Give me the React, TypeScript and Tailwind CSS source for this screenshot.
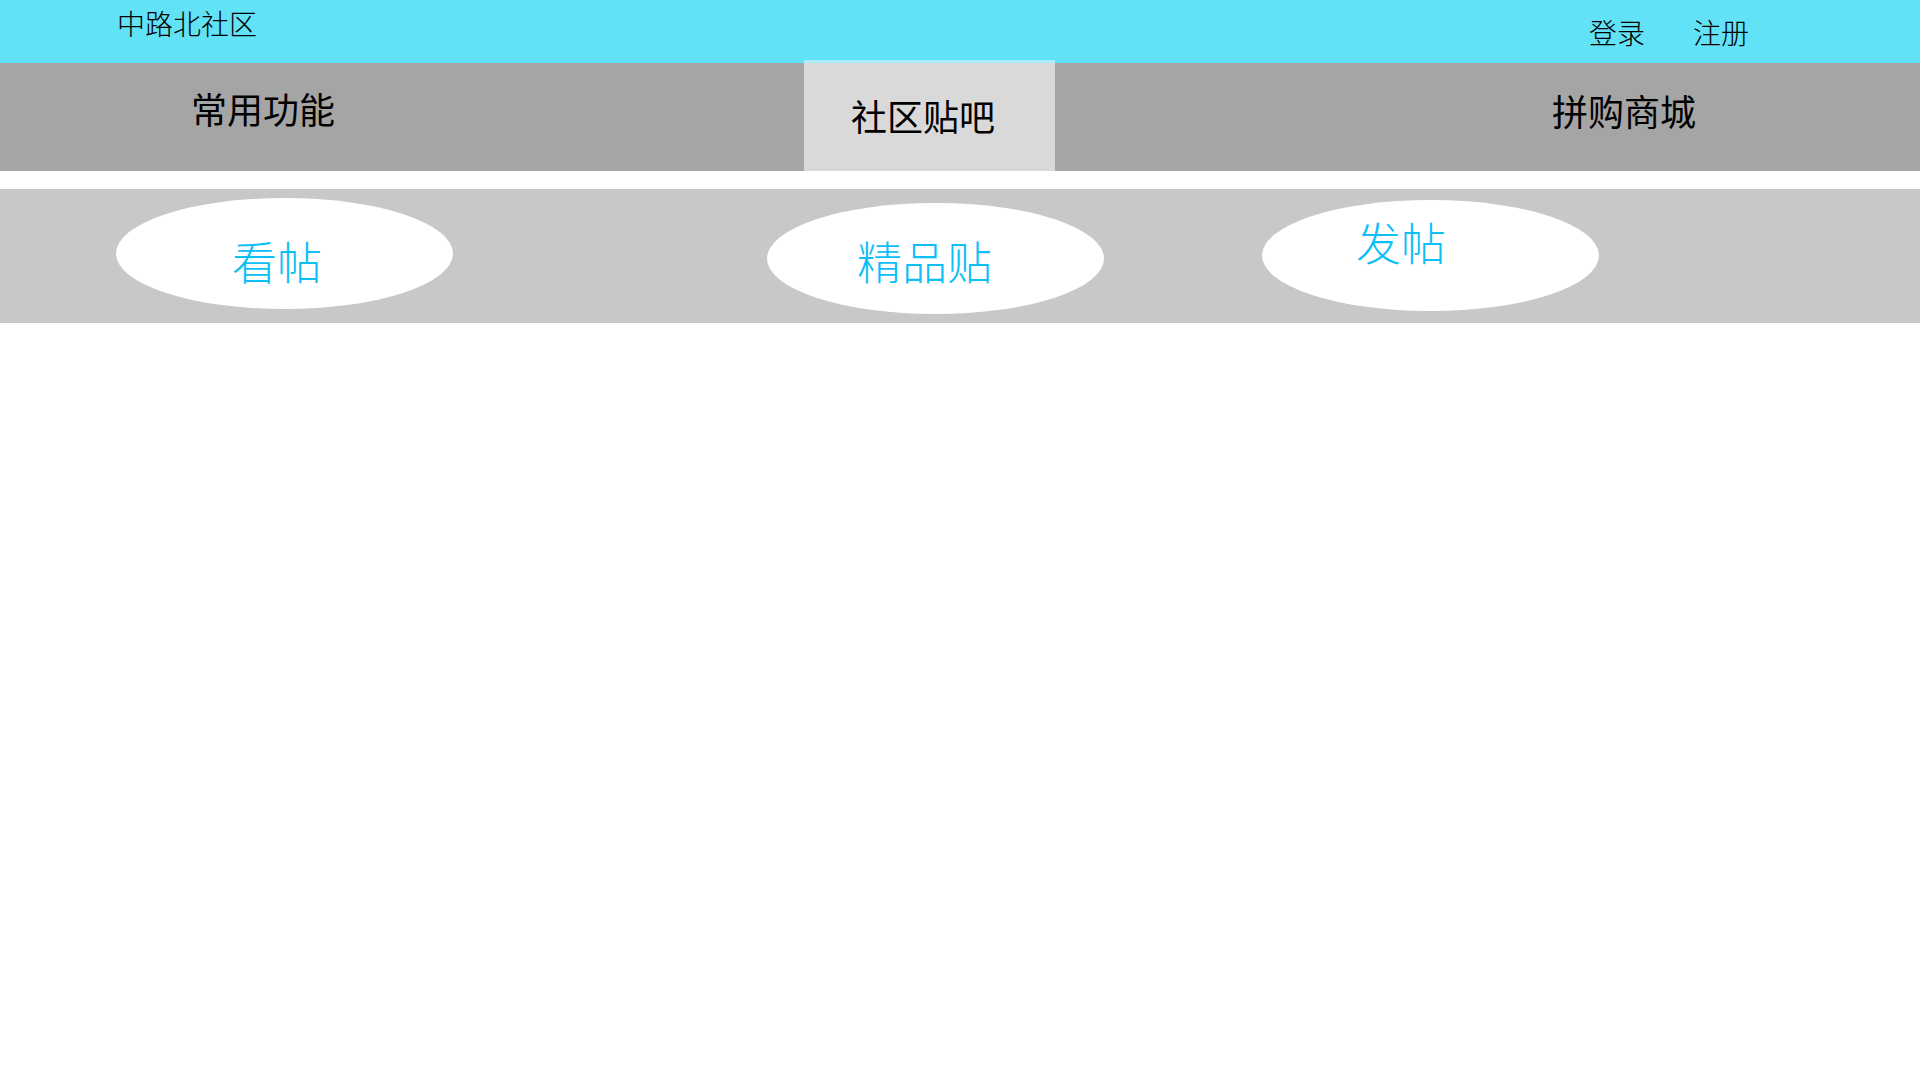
import React from "react";

const cjk = { fontFamily: '"Noto Sans CJK SC", "Noto Sans", sans-serif' };

const bubbles = [
  { label: "看帖", box: "ml-[116px] mt-[9px]", text: "pl-[116px] pt-[40px]" },
  { label: "精品贴", box: "ml-[314px] mt-[14px]", text: "pl-[90px] pt-[35px]" },
  { label: "发帖", box: "ml-[158px] mt-[11px]", text: "pl-[94px] pt-[19px]" },
];

const App = () => {
  return (
    <div className="w-[1920px] h-[1080px] bg-white flex flex-col" style={cjk}>
      {/* top bar */}
      <div className="h-[60px] bg-[#62e2f7] flex items-start text-black font-light">
        <p className="ml-[117px] mt-[9px] text-[28px] leading-none">中路北社区</p>
        <div className="ml-auto mr-[171px] mt-[18px] flex gap-[48px] text-[28px] leading-none">
          <p>登录</p>
          <p>注册</p>
        </div>
      </div>

      {/* nav tabs */}
      <div className="h-[111px] flex text-black text-[36px] leading-none">
        <div className="w-[804px] bg-[#a5a5a5] border-t-[3px] border-[#62e2f7] pl-[191px] pt-[27px]">
          <p>常用功能</p>
        </div>
        <div className="w-[251px] bg-[#d9d9d9] border-t-[3px] border-[#a8eef8] pl-[47px] pt-[34px]">
          <p>社区贴吧</p>
        </div>
        <div className="flex-1 bg-[#a5a5a5] border-t-[3px] border-[#62e2f7] pl-[497px] pt-[29px]">
          <p>拼购商城</p>
        </div>
      </div>

      {/* sub actions */}
      <div className="mt-[18px] h-[134px] bg-[#c8c8c8] flex items-start">
        {bubbles.map((b) => (
          <div
            key={b.label}
            className={`w-[337px] h-[111px] rounded-[50%] bg-white text-[#0cbff7] text-[45px] font-light leading-none ${b.box} ${b.text}`}
          >
            {b.label}
          </div>
        ))}
      </div>
    </div>
  );
};

export default App;
